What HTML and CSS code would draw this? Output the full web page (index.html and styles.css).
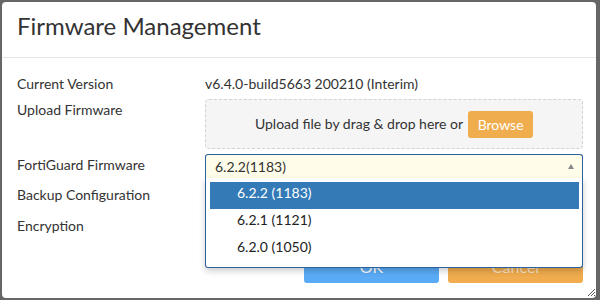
FILE: index.html
```html
<!DOCTYPE html>
<html lang="en">
<head>
    <meta charset="UTF-8">
    <title>Firmware Management</title>
    <link rel="stylesheet" href="styles.css">
</head>
<body>
    <div class="dialog">
        <div class="dialog-header">
            <h1>Firmware Management</h1>
        </div>
        <div class="dialog-body">
            <div class="row">
                <div class="label">Current Version</div>
                <div class="value">v6.4.0-build5663 200210 (Interim)</div>
            </div>
            <div class="row row-upload">
                <div class="label">Upload Firmware</div>
                <div class="value">
                    <div class="dropzone">
                        <span>Upload file by drag &amp; drop here or</span>
                        <button class="browse-btn">Browse</button>
                    </div>
                </div>
            </div>
            <div class="row row-select">
                <div class="label">FortiGuard Firmware</div>
                <div class="value">
                    <div class="select-wrap">
                        <div class="select">
                            <span>6.2.2(1183)</span>
                            <span class="arrow"></span>
                        </div>
                        <ul class="dropdown">
                            <li class="selected">6.2.2 (1183)</li>
                            <li>6.2.1 (1121)</li>
                            <li>6.2.0 (1050)</li>
                        </ul>
                    </div>
                </div>
            </div>
            <div class="row row-plain">
                <div class="label">Backup Configuration</div>
                <div class="value"></div>
            </div>
            <div class="row row-plain">
                <div class="label">Encryption</div>
                <div class="value"></div>
            </div>
            <div class="footer">
                <button class="btn btn-ok">OK</button>
                <button class="btn btn-cancel">Cancel</button>
            </div>
        </div>
        <svg class="grip" width="9" height="9" viewBox="0 0 9 9">
            <path d="M8 1 L1 8 M8 4 L4 8 M8 7 L7 8" stroke="#555" stroke-width="1"/>
        </svg>
    </div>
</body>
</html>
```

FILE: styles.css
```css
html, body {
    margin: 0;
    padding: 0;
}

body {
    background-color: #666;
    font-family: 'Lato', 'Open Sans', sans-serif;
    font-size: 14px;
    color: #333;
    padding: 2px 4px 2px 2px;
    width: 600px;
    height: 300px;
    box-sizing: border-box;
    overflow: hidden;
}

.dialog {
    position: relative;
    width: 594px;
    height: 296px;
    background-color: #fff;
    border-radius: 4px;
}

.dialog-header {
    height: 56px;
    box-sizing: border-box;
    padding: 9px 15px 0;
    border-bottom: 1px solid #e5e5e5;
}

.dialog-header h1 {
    margin: 0;
    font-size: 24px;
    font-weight: normal;
    line-height: 29px;
    color: #333;
}

.dialog-body {
    padding: 16px 13px 0 15px;
}

.row {
    display: flex;
    line-height: 20px;
}

.label {
    width: 188px;
    flex: none;
}

.value {
    flex: 1;
    min-width: 0;
}

.row-upload {
    margin-top: 5px;
}

.row-upload .label,
.row-select .label {
    padding-top: 1px;
}

.row-select {
    margin-top: 5px;
}

.row-plain {
    margin-top: 7px;
    height: 24px;
}

.dropzone {
    height: 50px;
    box-sizing: border-box;
    border: 1px dashed #d3d3d3;
    border-radius: 4px;
    background-color: #f5f5f5;
    display: flex;
    align-items: center;
    justify-content: center;
    gap: 5px;
}

.browse-btn {
    font-family: inherit;
    font-size: 14px;
    color: #fff;
    background-color: #f0ad4e;
    border: none;
    border-radius: 3px;
    height: 27px;
    width: 65px;
    padding: 0;
}

.select-wrap {
    position: relative;
}

.select {
    height: 24px;
    box-sizing: border-box;
    border: 1px solid #2c639c;
    border-bottom: none;
    border-radius: 3px 3px 0 0;
    background-color: #fffde9;
    padding: 2px 9px;
    display: flex;
    align-items: center;
    justify-content: space-between;
}

.arrow {
    width: 0;
    height: 0;
    border-left: 3px solid transparent;
    border-right: 3px solid transparent;
    border-bottom: 5px solid #888;
    margin-right: -1px;
}

.dropdown {
    position: absolute;
    top: 24px;
    left: 0;
    right: 0;
    margin: 0;
    padding: 4px 3px 4px 4px;
    list-style: none;
    background-color: #fff;
    border: 1px solid #2c639c;
    border-top: none;
    border-radius: 0 0 3px 3px;
    box-shadow: 0 3px 6px rgba(0, 0, 0, 0.2);
    z-index: 2;
}

.dropdown li {
    height: 27px;
    box-sizing: border-box;
    padding: 1px 0 0 27px;
    line-height: 20px;
    color: #222;
}

.dropdown li.selected {
    background-color: #337ab7;
    color: #fff;
}

.footer {
    display: flex;
    justify-content: flex-end;
    gap: 9px;
    margin-top: 10px;
}

.btn {
    width: 135px;
    height: 33px;
    border: none;
    border-radius: 3px;
    font-family: inherit;
    font-size: 16px;
    color: #fff;
}

.btn-ok {
    background-color: #5aabf6;
}

.btn-cancel {
    background-color: #f0ac4e;
    color: #fbe3c2;
}

.grip {
    position: absolute;
    right: 0;
    bottom: 1px;
}
```
